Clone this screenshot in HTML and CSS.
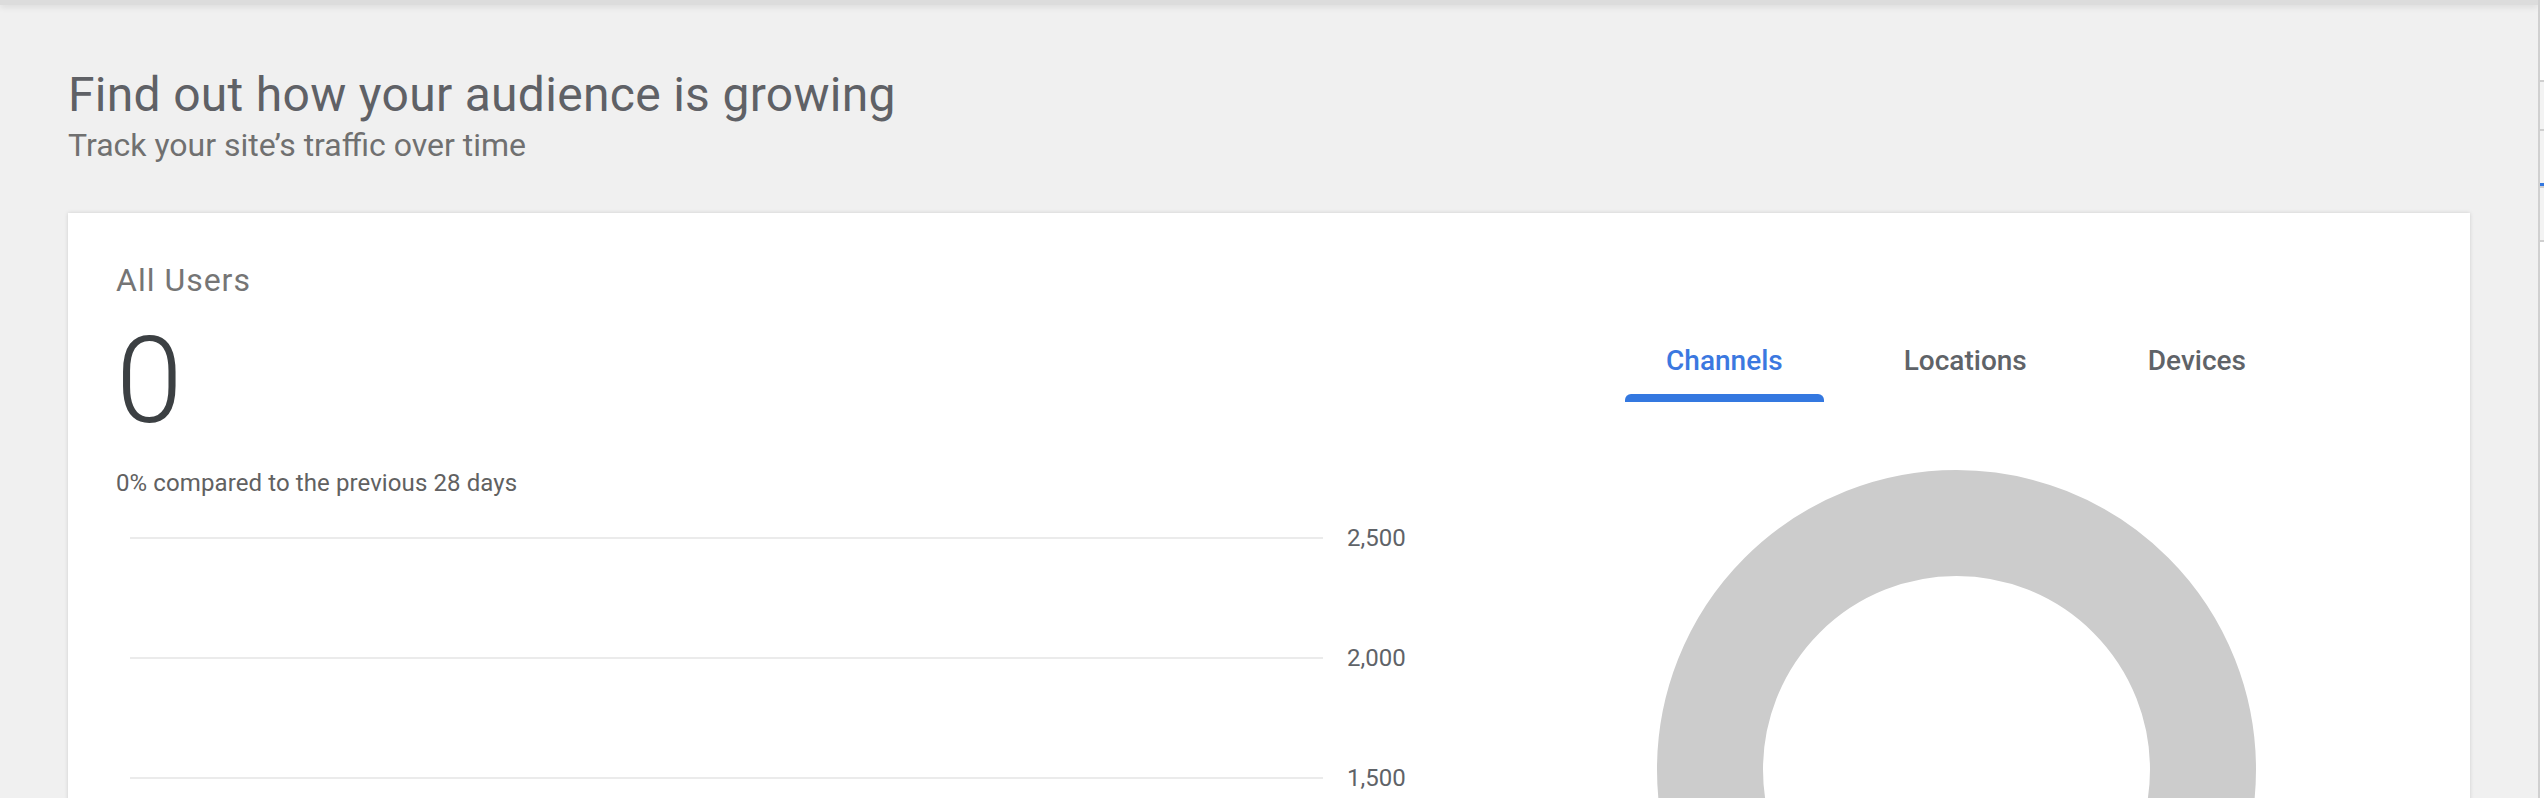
FILE: index.html
```html
<!DOCTYPE html>
<html lang="en">
<head>
<meta charset="utf-8">
<title>Audience</title>
<link rel="stylesheet" href="styles.css">
</head>
<body>
<div class="layout">
  <div class="main">
    <div class="topbar"></div>
    <div class="content">
      <h1 class="title">Find out how your audience is growing</h1>
      <p class="subtitle">Track your site’s traffic over time</p>
      <section class="card">
        <div class="left-col">
          <div class="metric-label">All Users</div>
          <div class="metric-value">0</div>
          <div class="metric-compare">0% compared to the previous 28 days</div>
          <div class="chart">
            <div class="chart-row"><div class="gline"></div><span class="axis-label">2,500</span></div>
            <div class="chart-row"><div class="gline"></div><span class="axis-label">2,000</span></div>
            <div class="chart-row"><div class="gline"></div><span class="axis-label">1,500</span></div>
          </div>
        </div>
        <div class="right-col">
          <div class="tabs">
            <div class="tab tab-active"><span class="tab-text">Channels</span><span class="tab-ind"></span></div>
            <div class="tab"><span class="tab-text">Locations</span><span class="tab-ind"></span></div>
            <div class="tab"><span class="tab-text">Devices</span><span class="tab-ind"></span></div>
          </div>
          <div class="donut"></div>
        </div>
      </section>
    </div>
  </div>
  <div class="rail">
    <div class="rail-top"></div>
    <div class="rail-seg"></div>
    <div class="rail-seg rail-seg-b"></div>
    <div class="rail-seg rail-seg-c"></div>
  </div>
</div>
</body>
</html>
```
FILE: styles.css
```css
html, body {
  margin: 0;
  padding: 0;
}
body {
  background: #f0f0f0;
  font-family: Roboto, "Liberation Sans", Arial, sans-serif;
  height: 798px;
  overflow: hidden;
}
.layout {
  display: flex;
  height: 798px;
}
.main {
  flex: 1;
  display: flex;
  flex-direction: column;
  min-width: 0;
}
.topbar {
  height: 5px;
  background: #dcdcdc;
  box-shadow: 0 2px 6px rgba(0, 0, 0, 0.10);
  flex: none;
}
.content {
  padding: 62px 68px 0 68px;
}
.title {
  margin: 0;
  font-size: 48px;
  line-height: 56px;
  font-weight: 400;
  color: #5f6166;
  letter-spacing: 0.3px;
}
.subtitle {
  margin: 2px 0 0 0;
  font-size: 32px;
  line-height: 40px;
  color: #707070;
}
.card {
  margin-top: 48px;
  background: #ffffff;
  height: 900px;
  box-shadow: 0 0 4px rgba(0, 0, 0, 0.14);
  display: grid;
  grid-template-columns: 1fr 932px;
  padding: 0 48px;
}
.left-col {
  padding-top: 47px;
  display: flex;
  flex-direction: column;
}
.metric-label {
  font-size: 32px;
  line-height: 40px;
  color: #757575;
  letter-spacing: 1px;
}
.metric-value {
  margin-top: 21px;
  font-size: 120px;
  line-height: 120px;
  font-weight: 300;
  color: #3c4043;
}
.metric-compare {
  margin-top: 26px;
  font-size: 24px;
  line-height: 32px;
  color: #616161;
  letter-spacing: 0.1px;
}
.chart {
  margin-top: 23px;
  width: 1292px;
  display: flex;
  flex-direction: column;
  gap: 88px;
}
.chart-row {
  height: 32px;
  display: flex;
  align-items: center;
  padding-left: 14px;
  gap: 24px;
}
.gline {
  flex: 1;
  height: 2px;
  background: #ebebeb;
}
.axis-label {
  flex: none;
  width: 61px;
  font-size: 24px;
  line-height: 32px;
  color: #5f6368;
}
.right-col {
  padding-top: 130px;
  display: flex;
  flex-direction: column;
  align-items: center;
}
.tabs {
  display: flex;
  gap: 39px;
}
.tab {
  display: flex;
  flex-direction: column;
  align-items: stretch;
  padding: 0;
}
.tab-text {
  padding: 0 41px;
  font-size: 28px;
  line-height: 36px;
  font-weight: 500;
  color: #5f6368;
  text-align: center;
}
.tab-ind {
  margin-top: 15px;
  height: 8px;
  border-radius: 6px 6px 0 0;
  background: transparent;
}
.tab-active .tab-text {
  color: #3b78e0;
}
.tab-active .tab-ind {
  background: #3478e0;
}
.donut {
  margin-top: 68px;
  width: 599px;
  height: 599px;
  flex: none;
  box-sizing: border-box;
  border: 106px solid #cccccc;
  border-radius: 50%;
}
.rail {
  width: 4px;
  flex: none;
  border-left: 2px solid #d0d0d0;
  background: #ffffff;
  display: flex;
  flex-direction: column;
}
.rail-top {
  height: 80px;
}
.rail-seg {
  height: 47px;
  border-top: 2px solid #cfcfcf;
  background: #f3f3f3;
}
.rail-seg-b {
  height: 52px;
  border-bottom: 3px solid #3478e0;
}
.rail-seg-c {
  height: 52px;
  border-bottom: 2px solid #cfcfcf;
}
```
